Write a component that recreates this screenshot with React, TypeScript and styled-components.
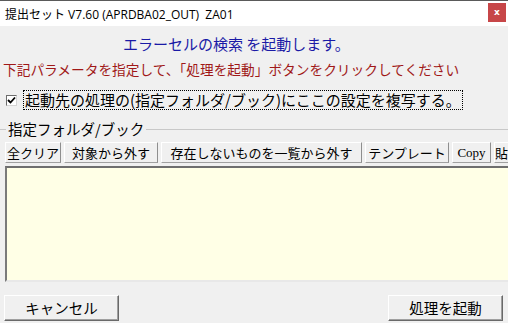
import styled, { createGlobalStyle } from "styled-components";

const GlobalStyle = createGlobalStyle`
  html, body {
    margin: 0;
    padding: 0;
    background: #f0f0f0;
  }
  body {
    font-family: "Noto Sans CJK JP", "Noto Sans", sans-serif;
  }
`;

const Window = styled.div`
  width: 508px;
  height: 323px;
  display: flex;
  flex-direction: column;
  background: #f0f0f0;
  overflow: hidden;
`;

const TitleBar = styled.div`
  height: 26px;
  box-sizing: border-box;
  border-top: 1px solid #5a5a5a;
  background: #ffffff;
  display: flex;
  align-items: center;
  justify-content: space-between;
  padding: 0 2px 0 5px;
`;

const TitleText = styled.span`
  font-family: "Open Sans", "Noto Sans CJK JP", sans-serif;
  font-size: 12px;
  color: #000;
  white-space: pre;
`;

const CloseButton = styled.div`
  width: 18px;
  height: 19px;
  margin-top: -3px;
  background: #c74648;
  color: #fff;
  font-family: "DejaVu Sans", sans-serif;
  font-weight: bold;
  font-size: 9px;
  display: flex;
  align-items: center;
  justify-content: center;
`;

const Message = styled.div<{ $color: string; $indent: number; $top: number; $size: number }>`
  margin-top: ${({ $top }) => $top}px;
  padding-left: ${({ $indent }) => $indent}px;
  height: 20px;
  line-height: 20px;
  font-size: ${({ $size }) => $size}px;
  color: ${({ $color }) => $color};
  white-space: nowrap;
`;

const CheckRow = styled.label`
  margin-top: 10px;
  height: 22px;
  display: flex;
  align-items: center;
  padding-left: 6px;
  gap: 6px;
`;

const CheckBox = styled.span`
  width: 11px;
  height: 11px;
  box-sizing: border-box;
  border: 1px solid #6d6d6d;
  border-right-color: #d4d4d4;
  border-bottom-color: #d4d4d4;
  background: #fff;
  display: flex;
  align-items: center;
  justify-content: center;
`;

const CheckLabel = styled.span`
  font-size: 15px;
  line-height: 18px;
  padding: 0 1px;
  border: 1px dotted #000;
  white-space: nowrap;
`;

const GroupHeader = styled.div`
  margin-top: 7px;
  height: 20px;
  display: flex;
  align-items: center;
  gap: 2px;
  &::before {
    content: "";
    width: 6px;
    border-top: 1px solid #c8c8c8;
    margin-top: 2px;
  }
  &::after {
    content: "";
    flex: 1;
    border-top: 1px solid #c8c8c8;
    margin-top: 2px;
  }
`;

const GroupLabel = styled.span`
  font-size: 14.5px;
  color: #000;
  white-space: nowrap;
`;

const Toolbar = styled.div`
  margin-top: 4px;
  padding-left: 5px;
  height: 21px;
  display: flex;
  gap: 3px;
`;

const ToolButton = styled.div<{ $width: number; $latin?: boolean }>`
  width: ${({ $width }) => $width}px;
  flex-shrink: 0;
  box-sizing: border-box;
  border: 1px solid #ffffff;
  border-right-color: #8e8e8e;
  border-bottom-color: #a0a0a0;
  background: #f0f0f0;
  font-family: ${({ $latin }) =>
    $latin ? `"Liberation Serif", serif` : `"Noto Sans CJK JP", sans-serif`};
  font-size: 13px;
  line-height: 19px;
  text-align: center;
  white-space: nowrap;
  overflow: hidden;
`;

const ListBox = styled.div`
  margin: 3px 0 0 5px;
  height: 116px;
  box-sizing: border-box;
  border: 2px solid #a0a0a0;
  border-top-color: #6e6e6e;
  border-left-color: #7a7a7a;
  border-right: none;
  border-bottom-color: #e8e8e8;
  background: #ffffe6;
`;

const Footer = styled.div`
  margin-top: 13px;
  display: flex;
  justify-content: space-between;
  padding: 0 5px 0 4px;
`;

const PushButton = styled.div`
  width: 115px;
  height: 26px;
  box-sizing: border-box;
  border: 1px solid #ffffff;
  border-right-color: #696969;
  border-bottom-color: #696969;
  box-shadow: inset -1px -1px 0 #a0a0a0;
  background: #f0f0f0;
  font-size: 14.5px;
  line-height: 23px;
  text-align: center;
  color: #000;
`;

const tools = [
  { label: "全クリア", width: 56 },
  { label: "対象から外す", width: 94 },
  { label: "存在しないものを一覧から外す", width: 201 },
  { label: "テンプレート", width: 84 },
  { label: "Copy", width: 39, latin: true },
  { label: "貼", width: 15 },
];

export default function App() {
  return (
    <>
      <GlobalStyle />
      <Window>
        <TitleBar>
          <TitleText>提出セット V7.60 (APRDBA02_OUT)  ZA01</TitleText>
          <CloseButton>x</CloseButton>
        </TitleBar>
        <Message $color="#1a1aa6" $indent={123} $top={8} $size={15}>
          エラーセルの検索 を起動します。
        </Message>
        <Message $color="#a01818" $indent={3} $top={5} $size={13.7}>
          下記パラメータを指定して、「処理を起動」ボタンをクリックしてください
        </Message>
        <CheckRow>
          <CheckBox>
            <svg width="9" height="9" viewBox="0 0 9 9">
              <path d="M1 4 L3.5 6.5 L8 1.5" stroke="#000" strokeWidth="1.8" fill="none" />
            </svg>
          </CheckBox>
          <CheckLabel>起動先の処理の(指定フォルダ/ブック)にここの設定を複写する。</CheckLabel>
        </CheckRow>
        <GroupHeader>
          <GroupLabel>指定フォルダ/ブック</GroupLabel>
        </GroupHeader>
        <Toolbar>
          {tools.map(t => (
            <ToolButton key={t.label} $width={t.width} $latin={t.latin}>
              {t.label}
            </ToolButton>
          ))}
        </Toolbar>
        <ListBox />
        <Footer>
          <PushButton>キャンセル</PushButton>
          <PushButton>処理を起動</PushButton>
        </Footer>
      </Window>
    </>
  );
}
